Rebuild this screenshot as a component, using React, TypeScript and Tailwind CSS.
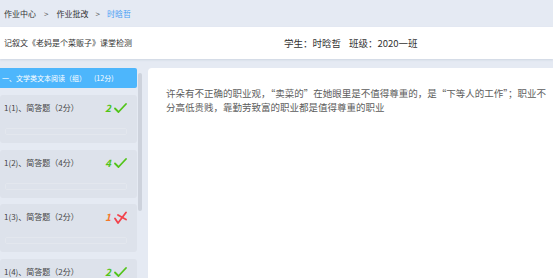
import React from "react";

const Check = () => (
  <svg width="13" height="10" viewBox="0 0 13 10" fill="none">
    <path d="M1 5.5 L4.5 9 L12 1" stroke="#52c41a" strokeWidth="1.8" strokeLinecap="round" strokeLinejoin="round" />
  </svg>
);

const Cross = () => (
  <svg width="13" height="13" viewBox="0 0 13 13" fill="none">
    <path d="M1 7.5 L4 12 L12 1.5" stroke="#f2434c" strokeWidth="1.8" strokeLinecap="round" strokeLinejoin="round" />
    <path d="M4 4 L12 8.5" stroke="#f2434c" strokeWidth="1.8" strokeLinecap="round" />
  </svg>
);

type Item = { label: string; score: string; ok: boolean };

const items: Item[] = [
  { label: "1(1)、简答题（2分）", score: "2", ok: true },
  { label: "1(2)、简答题（4分）", score: "4", ok: true },
  { label: "1(3)、简答题（2分）", score: "1", ok: false },
  { label: "1(4)、简答题（2分）", score: "2", ok: true },
];

export default function App() {
  return (
    <div className="w-[553px] h-[278px] overflow-hidden bg-[#e5eaf3] font-['Noto_Sans_CJK_SC',sans-serif] text-[#333]">
      <div className="h-[27px] flex items-center pl-[4px] text-[8px] leading-none">
        <span className="text-[#333]">作业中心</span>
        <span className="mx-[8px] text-[#555]">&gt;</span>
        <span className="text-[#333]">作业批改</span>
        <span className="mx-[7px] text-[#555]">&gt;</span>
        <span className="text-[#4a9ff5]">时晗哲</span>
      </div>
      <div className="h-[32px] bg-white flex items-center shadow-[0_1px_2px_rgba(100,120,150,0.18)] relative">
        <span className="pl-[4px] text-[8px] text-[#333]">记叙文《老妈是个菜贩子》课堂检测</span>
        <span className="ml-[152px] text-[9.5px] text-[#333]">
          学生：时晗哲<span className="ml-[8px]">班级：2020一班</span>
        </span>
      </div>
      <div className="flex pt-[9px]">
        <div className="w-[137px] flex flex-col">
          <div className="h-[20px] bg-[#4db6fc] rounded-r-[2px] flex items-center pl-[2px] text-white text-[7px] leading-none">
            <span>一、文学类文本阅读（组）</span>
            <span className="ml-[8px]">(12分)</span>
          </div>
          <div className="flex flex-col gap-[6.5px] mt-[7px]">
            {items.map((it, i) => (
              <div key={i} className="h-[48px] bg-[#dde2eb] rounded-[3px] relative">
                <div className="flex items-center h-[26px] pl-[4px] pr-[10px]">
                  <span className="text-[8px] text-[#444] flex-1">{it.label}</span>
                  <span
                    className={
                      "italic font-bold text-[10px] leading-none mr-[3px] " +
                      (it.ok ? "text-[#52c41a]" : "text-[#f5782a]")
                    }
                  >
                    {it.score}
                  </span>
                  {it.ok ? <Check /> : <Cross />}
                </div>
                <div className="mx-[5px] mt-[7px] h-[7px] w-[122px] border border-[#e3e7ee] rounded-[2px]" />
              </div>
            ))}
          </div>
        </div>
        <div className="w-[4px] ml-[1px] mt-[5px] h-[138px] bg-[#cdd2dc] rounded-[2px]" />
        <div className="ml-[6px] flex-1 h-[220px] bg-white rounded-tl-[4px] pl-[18px] pt-[18px] text-[9.5px] leading-[14px] text-[#5c5c5c]">
          许朵有不正确的职业观，“卖菜的”在她眼里是不值得尊重的，是“下等人的工作”；职业不
          <br />
          分高低贵贱，靠勤劳致富的职业都是值得尊重的职业
        </div>
      </div>
    </div>
  );
}
